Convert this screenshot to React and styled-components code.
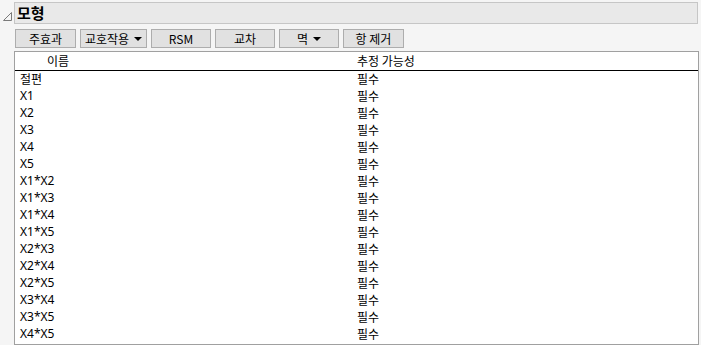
import styled, { createGlobalStyle } from 'styled-components';

const Global = createGlobalStyle`
  html, body {
    margin: 0;
    padding: 0;
    background: #f5f5f5;
  }
  body {
    font-family: "Noto Sans", "Noto Sans CJK KR", sans-serif;
    font-size: 12px;
    color: #000;
  }
`;

const Page = styled.div`
  width: 701px;
  height: 345px;
  padding: 2px 3px 0 3px;
  box-sizing: border-box;
  overflow: hidden;
`;

const Header = styled.div`
  display: flex;
  align-items: center;
  gap: 2px;
`;

const Toggle = styled.svg`
  width: 9px;
  height: 9px;
  margin-top: 7px;
  flex: none;
`;

const TitleBar = styled.div`
  flex: 1;
  height: 20px;
  background: #e9e9e9;
  border: 1px solid #c6c6c6;
  display: flex;
  align-items: center;
  padding-left: 2px;
  font-family: "Noto Sans CJK KR", "Noto Sans", sans-serif;
  font-weight: 700;
  font-size: 15px;
  line-height: 20px;
`;

const Body = styled.div`
  padding-left: 11px;
  width: 685px;
  display: flex;
  flex-direction: column;
`;

const Toolbar = styled.div`
  display: flex;
  gap: 4px;
  margin: 5px 0 3px 1px;
`;

const Button = styled.button`
  width: ${p => p.$w || 61}px;
  height: 19px;
  padding: 0;
  box-sizing: border-box;
  background: #e1e1e1;
  border: 1px solid #adadad;
  font-family: "Noto Sans CJK KR", "Noto Sans", sans-serif;
  font-size: 12px;
  line-height: 17px;
  color: #000;
  display: flex;
  align-items: center;
  justify-content: center;
  gap: 5px;
`;

const Arrow = styled.span`
  width: 0;
  height: 0;
  border-left: 4px solid transparent;
  border-right: 4px solid transparent;
  border-top: 4px solid #000;
  margin-top: 1px;
`;

const ListBox = styled.div`
  background: #fff;
  border: 1px solid #a0a0a0;
  height: 294px;
  box-sizing: border-box;
  overflow: hidden;
`;

const Row = styled.div`
  display: grid;
  grid-template-columns: 342px 1fr;
  height: 17px;
  line-height: 16px;
  font-size: 12px;
`;

const HeadRow = styled(Row)`
  height: 18px;
  line-height: 17px;
  border-bottom: 1px solid #000;
`;

const Cell = styled.div`
  padding-left: ${p => p.$pad ?? 5}px;
  white-space: nowrap;
  font-family: ${p => p.$latin
    ? '"Noto Sans", "Noto Sans CJK KR", sans-serif'
    : '"Noto Sans CJK KR", "Noto Sans", sans-serif'};
`;

const buttons = [
  { label: '주효과', w: 61 },
  { label: '교호작용', w: 67, arrow: true },
  { label: 'RSM', w: 60 },
  { label: '교차', w: 60 },
  { label: '멱', w: 60, arrow: true },
  { label: '항 제거', w: 61 },
];

const terms = [
  '절편', 'X1', 'X2', 'X3', 'X4', 'X5',
  'X1*X2', 'X1*X3', 'X1*X4', 'X1*X5',
  'X2*X3', 'X2*X4', 'X2*X5', 'X3*X4', 'X3*X5', 'X4*X5',
];

export default function App() {
  return (
    <Page>
      <Global />
      <Header>
        <Toggle viewBox="0 0 9 9">
          <path d="M8.5 0.5 L8.5 8.5 L0.5 8.5 Z" fill="none" stroke="#7a7a7a" strokeWidth="1" />
        </Toggle>
        <TitleBar>모형</TitleBar>
      </Header>
      <Body>
        <Toolbar>
          {buttons.map(b => (
            <Button key={b.label} $w={b.w}>
              {b.label}
              {b.arrow && <Arrow />}
            </Button>
          ))}
        </Toolbar>
        <ListBox>
          <HeadRow>
            <Cell $pad={32}>이름</Cell>
            <Cell $pad={0}>추정 가능성</Cell>
          </HeadRow>
          {terms.map(t => (
            <Row key={t}>
              <Cell $latin={/^X/.test(t)}>{t}</Cell>
              <Cell $pad={0}>필수</Cell>
            </Row>
          ))}
        </ListBox>
      </Body>
    </Page>
  );
}
